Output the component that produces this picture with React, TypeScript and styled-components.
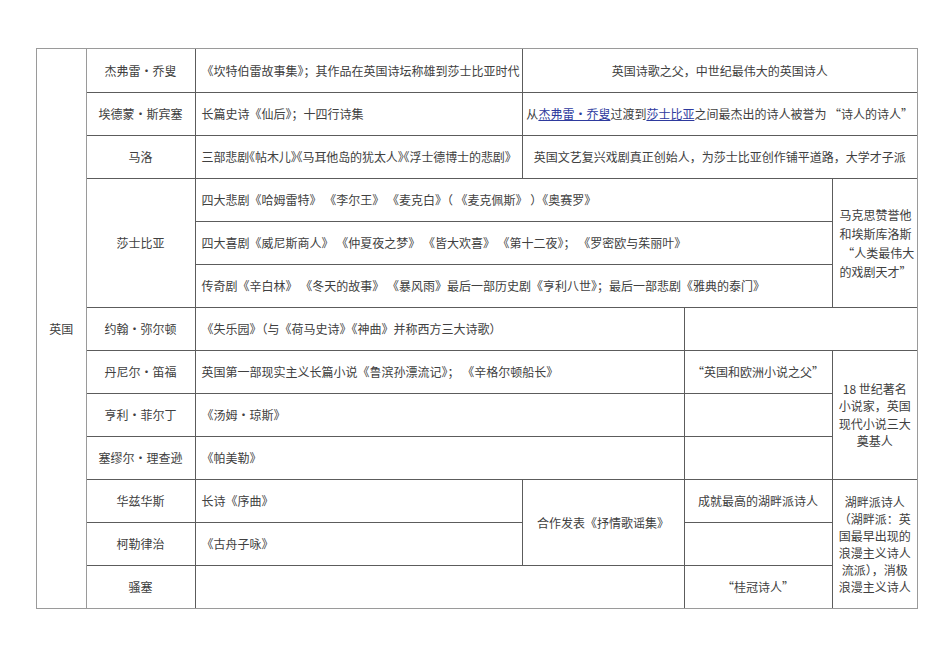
import React from "react";
import styled, { createGlobalStyle } from "styled-components";

const GlobalStyle = createGlobalStyle`
    html,
    body {
        margin: 0;
        padding: 0;
        background: #ffffff;
    }
    body {
        font-family: "Noto Sans CJK SC", "Noto Sans", sans-serif;
        font-size: 12px;
        color: #404040;
    }
`;

const Page = styled.div`
    padding: 48px 0 0 36px;
`;

const Frame = styled.div`
    width: 880px;
    border: 1px solid #9a9a9a;
`;

const Sheet = styled.table`
    width: 100%;
    table-layout: fixed;
    border-collapse: collapse;
    border-style: hidden;
`;

const Row = styled.tr`
    height: 43px;
`;

const Cell = styled.td<{
    $align?: "left" | "center";
    $lh?: number;
    $pad?: number;
    $tight?: boolean;
}>`
    border: 1px solid #5c5c5c;
    padding: 0 ${(p) => p.$pad ?? 6}px;
    text-align: ${(p) => p.$align ?? "left"};
    vertical-align: middle;
    line-height: ${(p) => (p.$lh ? `${p.$lh}px` : "normal")};
    white-space: nowrap;
    overflow: hidden;
    font-feature-settings: ${(p) => (p.$tight ? '"halt"' : "normal")};
    letter-spacing: ${(p) => (p.$tight ? "-0.1px" : "normal")};
`;

const Country = styled(Cell)`
    border-color: #9a9a9a;
    text-align: center;
`;

const Name = styled(Cell)`
    text-align: center;
`;

const Link = styled.a`
    color: #2e3a9e;
    text-decoration: underline;
`;

const widths = [49, 109, 327, 162, 148, 85];

export default function App(): JSX.Element {
    return (
        <>
            <GlobalStyle />
            <Page>
                <Frame>
                    <Sheet>
                        <colgroup>
                            {widths.map((w, i) => (
                                <col key={i} style={{ width: w }} />
                            ))}
                        </colgroup>
                        <tbody>
                            <Row>
                                <Country rowSpan={13}>英国</Country>
                                <Name>杰弗雷·乔叟</Name>
                                <Cell>《坎特伯雷故事集》；其作品在英国诗坛称雄到莎士比亚时代</Cell>
                                <Cell colSpan={3} $align="center">
                                    英国诗歌之父，中世纪最伟大的英国诗人
                                </Cell>
                            </Row>
                            <Row>
                                <Name>埃德蒙·斯宾塞</Name>
                                <Cell>长篇史诗《仙后》；十四行诗集</Cell>
                                <Cell colSpan={3} $align="center" $pad={2}>
                                    从<Link href="#">杰弗雷·乔叟</Link>过渡到<Link href="#">莎士比亚</Link>
                                    之间最杰出的诗人被誉为 “诗人的诗人”
                                </Cell>
                            </Row>
                            <Row>
                                <Name>马洛</Name>
                                <Cell $tight>三部悲剧《帖木儿》《马耳他岛的犹太人》《浮士德博士的悲剧》</Cell>
                                <Cell colSpan={3} $align="center">
                                    英国文艺复兴戏剧真正创始人，为莎士比亚创作铺平道路，大学才子派
                                </Cell>
                            </Row>
                            <Row>
                                <Name rowSpan={3}>莎士比亚</Name>
                                <Cell colSpan={3}>
                                    四大悲剧《哈姆雷特》 《李尔王》 《麦克白》（ 《麦克佩斯》 ）《奥赛罗》
                                </Cell>
                                <Cell rowSpan={3} $lh={19} $pad={7}>
                                    马克思赞誉他
                                    <br />
                                    和埃斯库洛斯
                                    <br />
                                    &nbsp;“人类最伟大
                                    <br />
                                    的戏剧天才”
                                </Cell>
                            </Row>
                            <Row>
                                <Cell colSpan={3}>
                                    四大喜剧《威尼斯商人》 《仲夏夜之梦》 《皆大欢喜》 《第十二夜》； 《罗密欧与茱丽叶》
                                </Cell>
                            </Row>
                            <Row>
                                <Cell colSpan={3}>
                                    传奇剧《辛白林》 《冬天的故事》 《暴风雨》最后一部历史剧《亨利八世》；最后一部悲剧《雅典的泰门》
                                </Cell>
                            </Row>
                            <Row>
                                <Name>约翰·弥尔顿</Name>
                                <Cell colSpan={2}>《失乐园》（与《荷马史诗》《神曲》并称西方三大诗歌）</Cell>
                                <Cell colSpan={2} />
                            </Row>
                            <Row>
                                <Name>丹尼尔·笛福</Name>
                                <Cell colSpan={2}>
                                    英国第一部现实主义长篇小说《鲁滨孙漂流记》； 《辛格尔顿船长》
                                </Cell>
                                <Cell $align="center">“英国和欧洲小说之父”</Cell>
                                <Cell rowSpan={3} $align="center" $lh={17.5}>
                                    18 世纪著名
                                    <br />
                                    小说家，英国
                                    <br />
                                    现代小说三大
                                    <br />
                                    奠基人
                                </Cell>
                            </Row>
                            <Row>
                                <Name>亨利·菲尔丁</Name>
                                <Cell colSpan={2}>《汤姆•琼斯》</Cell>
                                <Cell />
                            </Row>
                            <Row>
                                <Name>塞缪尔·理查逊</Name>
                                <Cell colSpan={2}>《帕美勒》</Cell>
                                <Cell />
                            </Row>
                            <Row>
                                <Name>华兹华斯</Name>
                                <Cell>长诗《序曲》</Cell>
                                <Cell rowSpan={2} $align="center">
                                    合作发表《抒情歌谣集》
                                </Cell>
                                <Cell $align="center">成就最高的湖畔派诗人</Cell>
                                <Cell rowSpan={3} $align="center" $lh={17}>
                                    湖畔派诗人
                                    <br />
                                    （湖畔派：英
                                    <br />
                                    国最早出现的
                                    <br />
                                    浪漫主义诗人
                                    <br />
                                    流派），消极
                                    <br />
                                    浪漫主义诗人
                                </Cell>
                            </Row>
                            <Row>
                                <Name>柯勒律治</Name>
                                <Cell>《古舟子咏》</Cell>
                                <Cell />
                            </Row>
                            <Row>
                                <Name>骚塞</Name>
                                <Cell colSpan={2} />
                                <Cell $align="center">“桂冠诗人”</Cell>
                            </Row>
                        </tbody>
                    </Sheet>
                </Frame>
            </Page>
        </>
    );
}
